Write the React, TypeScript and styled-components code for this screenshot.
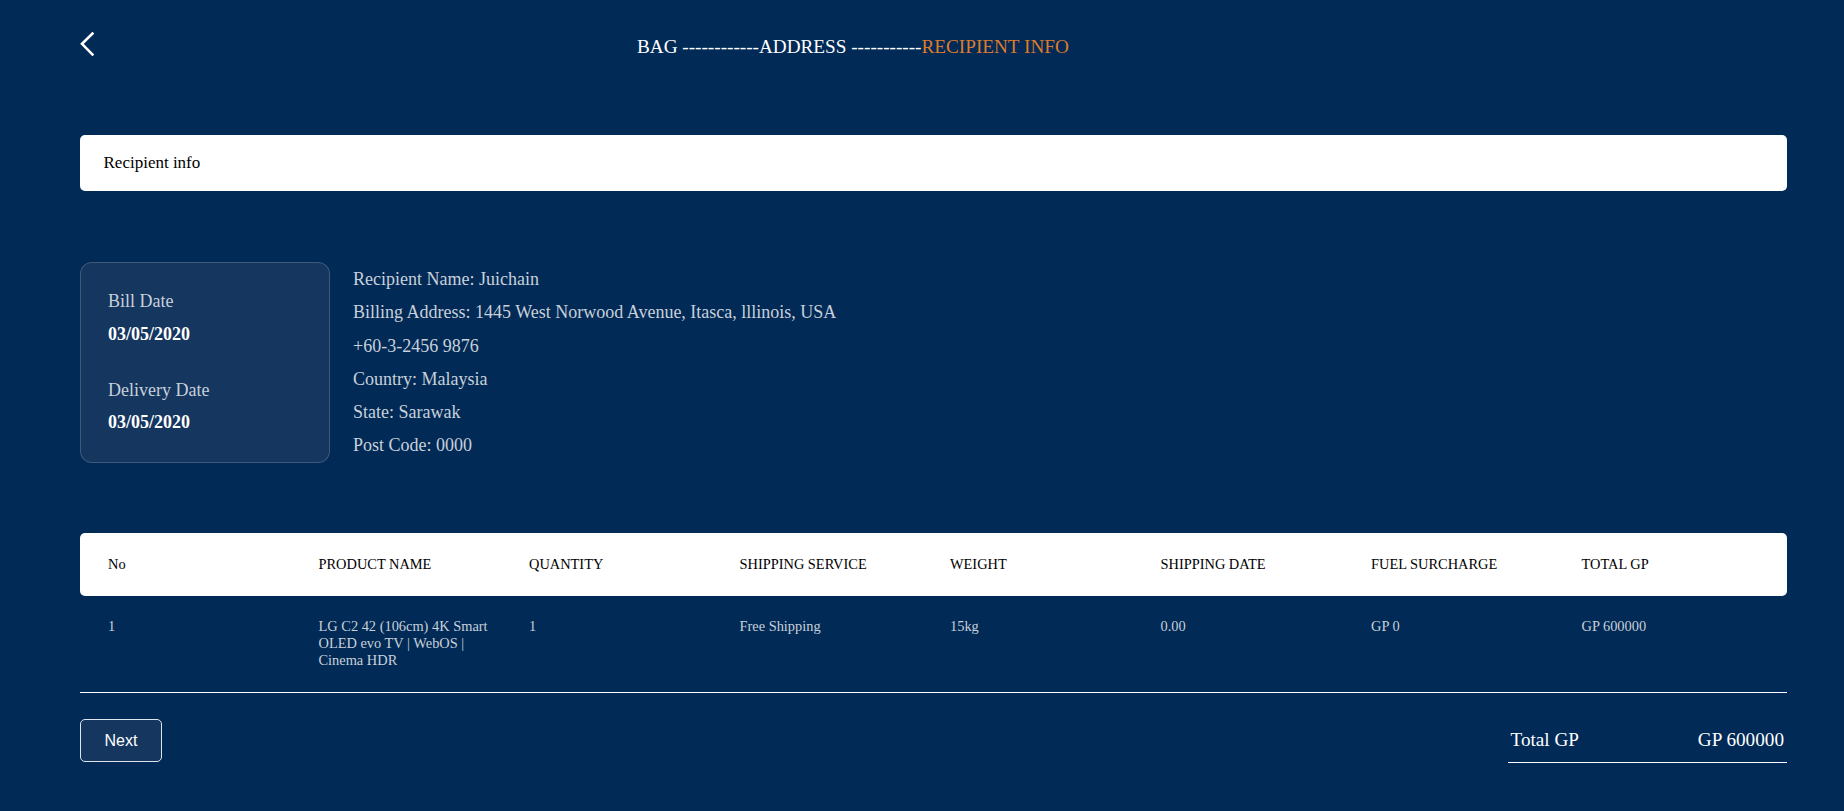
import React from "react";
import styled, { createGlobalStyle } from "styled-components";

const GlobalStyle = createGlobalStyle`
  html, body {
    margin: 0;
    padding: 0;
    background: #012a56;
  }
  body {
    font-family: "Liberation Serif", "Times New Roman", serif;
  }
  * { box-sizing: border-box; }
`;

const Page = styled.div`
  min-height: 811px;
  padding: 32px 57px 0 80px;
  background: #012a56;
  color: #fff;
`;

const Header = styled.header`
  display: flex;
  align-items: flex-start;
  height: 24px;
`;

const BackButton = styled.button`
  display: flex;
  width: 14px;
  height: 24px;
  padding: 0;
  border: 0;
  background: none;
  color: #fff;
  cursor: pointer;
`;

const Steps = styled.h3`
  margin: 3.5px 0 0 543px;
  font-size: 19.2px;
  font-weight: 400;
  line-height: normal;
  white-space: pre;
`;

const Step = styled.span<{ $active?: boolean }>`
  color: ${(p) => (p.$active ? "#df7a2c" : "#ffffff")};
`;

const TitleBar = styled.div`
  margin-top: 79px;
  height: 56px;
  display: flex;
  align-items: center;
  padding-left: 23.5px;
  background: #fff;
  border-radius: 5px;
  color: #000;
  font-size: 17px;
`;

const Summary = styled.section`
  margin-top: 71px;
  display: flex;
  align-items: flex-start;
  gap: 23px;
`;

const DateCard = styled.div`
  width: 250px;
  padding: 28px 27px 28.5px;
  background: #14365f;
  border: 1px solid rgba(255, 255, 255, 0.18);
  border-radius: 12px;
  display: flex;
  flex-direction: column;
  gap: 35px;
`;

const DateGroup = styled.div`
  display: flex;
  flex-direction: column;
  gap: 11.5px;
`;

const DateLabel = styled.div`
  font-size: 18px;
  line-height: normal;
  color: #c8d0da;
`;

const DateValue = styled.div`
  font-size: 18px;
  line-height: normal;
  font-weight: 700;
  color: #fff;
`;

const InfoList = styled.div`
  display: flex;
  flex-direction: column;
  padding-top: 1px;
  font-size: 18px;
  line-height: 33.3px;
  color: #c8d0da;
`;

const Table = styled.div`
  margin-top: 70.5px;
`;

const HeadRow = styled.div`
  display: grid;
  grid-template-columns: repeat(8, 210.5px);
  padding: 23px 0 23.5px 28px;
  background: #fff;
  border-radius: 5px;
  color: #000;
  font-size: 14.4px;
  line-height: 16.5px;
`;

const BodyRow = styled.div`
  display: grid;
  grid-template-columns: repeat(8, 210.5px);
  padding: 22px 0 24px 28px;
  border-bottom: 1px solid #fff;
  color: #c8d0da;
  font-size: 14.4px;
  line-height: 16.7px;
`;

const Cell = styled.div`
  padding-right: 30px;
`;

const Footer = styled.div`
  margin-top: 26px;
  display: flex;
  justify-content: space-between;
  align-items: flex-end;
`;

const NextButton = styled.button`
  width: 82px;
  height: 43px;
  padding: 0;
  background: #14365f;
  border: 1px solid #dfe5ec;
  border-radius: 5px;
  color: #fff;
  font-family: "Liberation Sans", Arial, sans-serif;
  font-size: 16px;
  cursor: pointer;
`;

const TotalBox = styled.div`
  width: 279px;
  display: flex;
  justify-content: space-between;
  margin-bottom: -0.5px;
  padding: 0 3px 10.5px 2.5px;
  border-bottom: 1px solid #fff;
  font-size: 19.2px;
  line-height: normal;
  color: #fff;
`;

const headers = [
  "No",
  "PRODUCT NAME",
  "QUANTITY",
  "SHIPPING SERVICE",
  "WEIGHT",
  "SHIPPING DATE",
  "FUEL SURCHARGE",
  "TOTAL GP",
];

const row = [
  "1",
  "LG C2 42 (106cm) 4K Smart OLED evo TV | WebOS | Cinema HDR",
  "1",
  "Free Shipping",
  "15kg",
  "0.00",
  "GP 0",
  "GP 600000",
];

const info = [
  "Recipient Name: Juichain",
  "Billing Address: 1445 West Norwood Avenue, Itasca, lllinois, USA",
  "+60-3-2456 9876",
  "Country: Malaysia",
  "State: Sarawak",
  "Post Code: 0000",
];

export default function App() {
  return (
    <>
      <GlobalStyle />
      <Page>
        <Header>
          <BackButton aria-label="Back">
            <svg width="14" height="24" viewBox="0 0 14 24" fill="none">
              <polyline
                points="12.5,1.5 2,11.8 12.5,22.5"
                stroke="currentColor"
                strokeWidth="2.6"
                strokeLinecap="square"
                strokeLinejoin="miter"
              />
            </svg>
          </BackButton>
          <Steps>
            <Step>BAG ------------ADDRESS -----------</Step>
            <Step $active>RECIPIENT INFO</Step>
          </Steps>
        </Header>

        <TitleBar>Recipient info</TitleBar>

        <Summary>
          <DateCard>
            <DateGroup>
              <DateLabel>Bill Date</DateLabel>
              <DateValue>03/05/2020</DateValue>
            </DateGroup>
            <DateGroup>
              <DateLabel>Delivery Date</DateLabel>
              <DateValue>03/05/2020</DateValue>
            </DateGroup>
          </DateCard>
          <InfoList>
            {info.map((line) => (
              <div key={line}>{line}</div>
            ))}
          </InfoList>
        </Summary>

        <Table>
          <HeadRow>
            {headers.map((h) => (
              <Cell key={h}>{h}</Cell>
            ))}
          </HeadRow>
          <BodyRow>
            {row.map((c, i) => (
              <Cell key={i}>{c}</Cell>
            ))}
          </BodyRow>
        </Table>

        <Footer>
          <NextButton>Next</NextButton>
          <TotalBox>
            <span>Total GP</span>
            <span>GP 600000</span>
          </TotalBox>
        </Footer>
      </Page>
    </>
  );
}
